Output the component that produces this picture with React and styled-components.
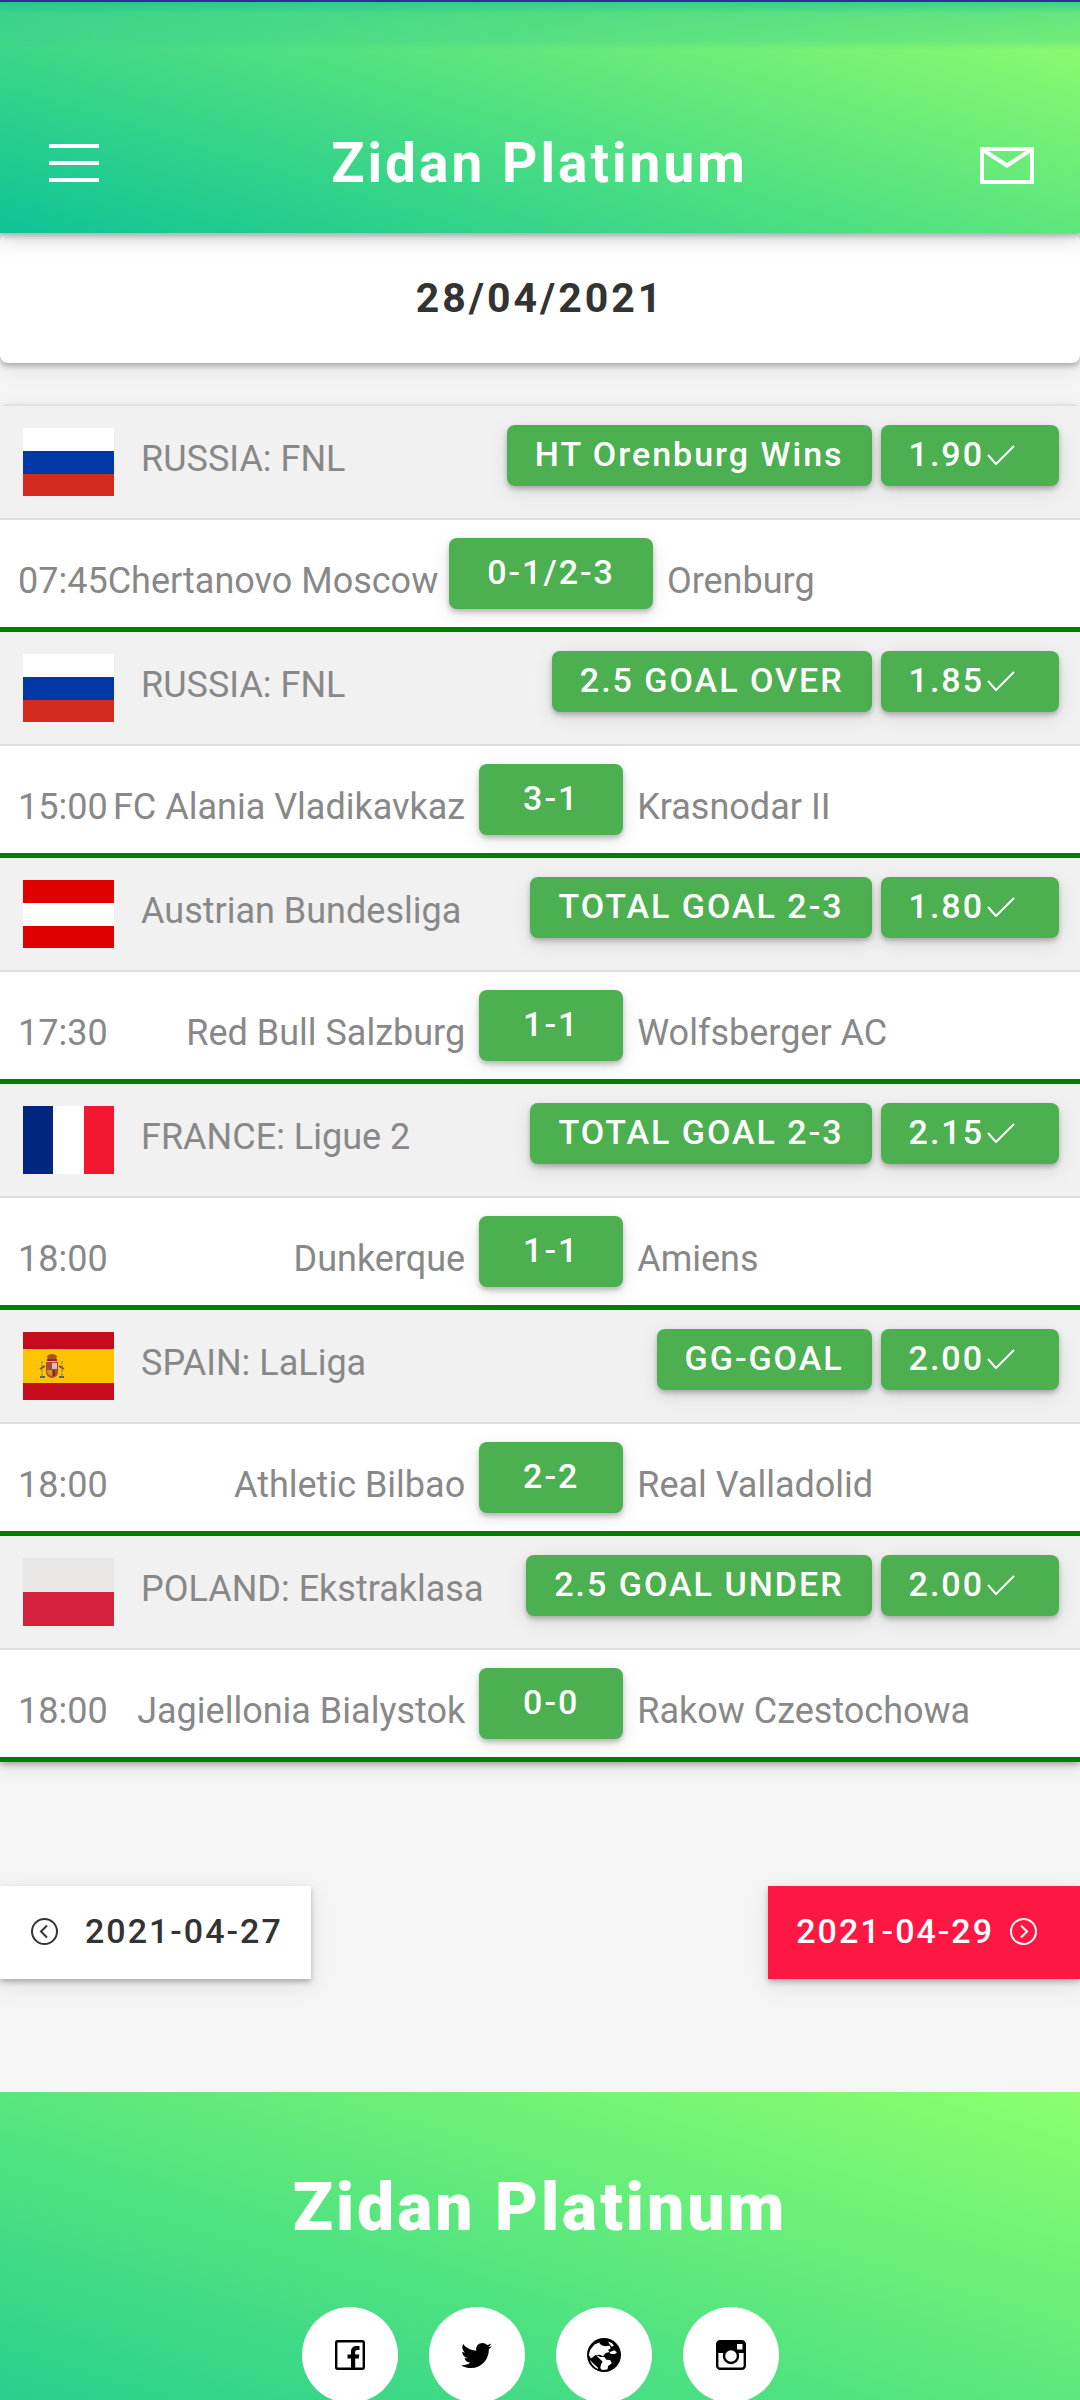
import React from "react";
import styled, { createGlobalStyle, css } from "styled-components";
import { FaTwitter } from "react-icons/fa";

const matches = [
  {
    id: 1,
    flag: "russia",
    league: "RUSSIA: FNL",
    tip: "HT Orenburg Wins",
    odd: "1.90",
    time: "07:45",
    home: "Chertanovo Moscow",
    score: "0-1/2-3",
    away: "Orenburg",
  },
  {
    id: 2,
    flag: "russia",
    league: "RUSSIA: FNL",
    tip: "2.5 GOAL OVER",
    odd: "1.85",
    time: "15:00",
    home: "FC Alania Vladikavkaz",
    score: "3-1",
    away: "Krasnodar II",
  },
  {
    id: 3,
    flag: "austria",
    league: "Austrian Bundesliga",
    tip: "TOTAL GOAL 2-3",
    odd: "1.80",
    time: "17:30",
    home: "Red Bull Salzburg",
    score: "1-1",
    away: "Wolfsberger AC",
  },
  {
    id: 4,
    flag: "france",
    league: "FRANCE: Ligue 2",
    tip: "TOTAL GOAL 2-3",
    odd: "2.15",
    time: "18:00",
    home: "Dunkerque",
    score: "1-1",
    away: "Amiens",
  },
  {
    id: 5,
    flag: "spain",
    league: "SPAIN: LaLiga",
    tip: "GG-GOAL",
    odd: "2.00",
    time: "18:00",
    home: "Athletic Bilbao",
    score: "2-2",
    away: "Real Valladolid",
  },
  {
    id: 6,
    flag: "poland",
    league: "POLAND: Ekstraklasa",
    tip: "2.5 GOAL UNDER",
    odd: "2.00",
    time: "18:00",
    home: "Jagiellonia Bialystok",
    score: "0-0",
    away: "Rakow Czestochowa",
  },
];

const MenuIcon = () => (
  <svg width="50" height="38" viewBox="0 0 50 38" fill="#fff">
    <rect width="50" height="4" />
    <rect y="17" width="50" height="4" />
    <rect y="34" width="50" height="4" />
  </svg>
);

const MailIcon = () => (
  <svg width="54" height="42" viewBox="0 0 54 42" fill="none" stroke="#fff">
    <rect x="2" y="7" width="50" height="33" strokeWidth="4" />
    <path d="M3 8L27 23.5L51 8" strokeWidth="4" />
  </svg>
);

const CheckIcon = () => (
  <svg width="28" height="20" viewBox="0 0 28 20" fill="none" stroke="#fff">
    <path d="M1 10L9 19L27 1" strokeWidth="2" strokeLinejoin="round" />
  </svg>
);

const ChevronCircle = ({ direction }) => (
  <svg
    width="27"
    height="27"
    viewBox="0 0 27 27"
    fill="none"
    stroke="currentColor"
    strokeWidth="2"
  >
    <circle cx="13.5" cy="13.5" r="12.5" />
    <path
      d={direction === "left" ? "M16 7.5L10 13.5L16 19.5" : "M11 7.5L17 13.5L11 19.5"}
    />
  </svg>
);

const FacebookIcon = () => (
  <svg width="30" height="30" viewBox="0 0 30 30">
    <rect
      x="1.2"
      y="1.2"
      width="27.6"
      height="27.6"
      rx="1.5"
      fill="none"
      stroke="#000"
      strokeWidth="2.4"
    />
    <path d="M16 29V18.5H12.5V14.5H16V11.8C16 8 18.3 6 21.6 6H24.5V10H22.4C20.9 10 20.2 10.8 20.2 12V14.5H24.3L23.8 18.5H20.2V29Z" />
  </svg>
);

const GlobeIcon = () => (
  <svg width="34" height="34" viewBox="0 0 100 100">
    <circle cx="50" cy="50" r="50" />
    <g fill="#fff">
      <path d="M10 34L22 19L37 13L43 21L55 24L66 22L70 30L62 35L66 41L55 44L47 54L38 49L25 50L12 60L5 50Z" />
      <path d="M26 50L40 56L51 56L57 64L68 65L73 74L62 82L60 93L44 94L39 88L42 76L46 70L38 62Z" />
      <path d="M62 10L73 15L79 23L73 26L66 18Z" />
      <path d="M66 42L80 36L88 42L82 47L70 47Z" />
      <path d="M8 64L14 76L24 87L33 92L31 86L18 74Z" />
    </g>
    <path d="M36 17L48 9L60 16L50 22Z" />
  </svg>
);

const InstagramIcon = () => (
  <svg width="30" height="30" viewBox="0 0 30 30">
    <rect
      x="1.2"
      y="1.2"
      width="27.6"
      height="27.6"
      rx="3"
      fill="none"
      stroke="#000"
      strokeWidth="2.4"
    />
    <path d="M1 4Q1 1 4 1H26Q29 1 29 4V13H1Z" />
    <rect x="21" y="4" width="5.5" height="5.5" fill="#fff" />
    <circle cx="15" cy="16" r="7" fill="#fff" stroke="#000" strokeWidth="2.4" />
  </svg>
);

const Crest = () => (
  <svg width="26" height="26" viewBox="0 0 26 26">
    <path d="M8 3Q13 -1 18 3L17 7H9Z" fill="#a8542a" />
    <rect x="8" y="6" width="10" height="2" fill="#c8102e" />
    <path d="M7 9H19V19Q19 24 13 25Q7 24 7 19Z" fill="#a5502c" />
    <path d="M13 10H18V16H13Z" fill="#dcb7c4" />
    <path d="M8 17H13V23Q9 22 8 19Z" fill="#d8902c" />
    <path d="M14 17H16V23H14Z" fill="#7c2a20" />
    <path
      d="M3 8V23M23 8V23"
      stroke="#a59a86"
      strokeWidth="2"
      strokeDasharray="3 1"
    />
    <path d="M1 16L6 13M25 16L20 13" stroke="#a5442c" strokeWidth="2" />
    <path d="M1 24H6M20 24H25" stroke="#4d6584" strokeWidth="2" />
  </svg>
);

const App = () => {
  return (
    <Page>
      <GlobalStyle />

      <Header>
        <StatusBar />
        <Toolbar>
          <IconButton type="button" aria-label="Menu">
            <MenuIcon />
          </IconButton>
          <Brand>Zidan Platinum</Brand>
          <IconButton type="button" aria-label="Messages">
            <MailIcon />
          </IconButton>
        </Toolbar>
      </Header>

      <DateCard>28/04/2021</DateCard>

      <MatchList>
        {matches.map((match) => (
          <Match key={match.id}>
            <LeagueRow>
              <League>
                <Flag $country={match.flag}>
                  {match.flag === "spain" && <Crest />}
                </Flag>
                <LeagueName>{match.league}</LeagueName>
              </League>
              <Tips>
                <TipButton type="button">{match.tip}</TipButton>
                <OddButton type="button">
                  {match.odd}
                  <CheckIcon />
                </OddButton>
              </Tips>
            </LeagueRow>
            <GameRow>
              <HomeSide>
                <span>{match.time}</span>
                <span>{match.home}</span>
              </HomeSide>
              <ScoreButton type="button">{match.score}</ScoreButton>
              <AwaySide>{match.away}</AwaySide>
            </GameRow>
          </Match>
        ))}
      </MatchList>

      <DayNav>
        <PrevLink href="#2021-04-27">
          <ChevronCircle direction="left" />
          2021-04-27
        </PrevLink>
        <NextLink href="#2021-04-29">
          2021-04-29
          <ChevronCircle direction="right" />
        </NextLink>
      </DayNav>

      <Footer>
        <FooterBrand>Zidan Platinum</FooterBrand>
        <Socials>
          <SocialLink href="#facebook" aria-label="Facebook">
            <FacebookIcon />
          </SocialLink>
          <SocialLink href="#twitter" aria-label="Twitter">
            <FaTwitter size={31} />
          </SocialLink>
          <SocialLink href="#website" aria-label="Website">
            <GlobeIcon />
          </SocialLink>
          <SocialLink href="#instagram" aria-label="Instagram">
            <InstagramIcon />
          </SocialLink>
        </Socials>
      </Footer>
    </Page>
  );
};

// Styled Components
const GlobalStyle = createGlobalStyle`
  * {
    box-sizing: border-box;
  }

  body {
    margin: 0;
    background: #f5f5f5;
    font-family: Roboto, "Liberation Sans", sans-serif;
  }

  button {
    font-family: inherit;
    border: none;
    cursor: pointer;
  }

  svg {
    display: block;
    flex-shrink: 0;
  }
`;

const raised = css`
  box-shadow: 0 3px 5px rgba(0, 0, 0, 0.24), 0 6px 20px rgba(0, 0, 0, 0.1);
`;

const Page = styled.div`
  height: 100vh;
  overflow-x: hidden;
  overflow-y: auto;
  scrollbar-width: none;
`;

const Header = styled.header`
  position: relative;
  z-index: 1;
  background: linear-gradient(17deg, #0ec395, #96ff6c);
  box-shadow: 0 3px 6px rgba(0, 0, 0, 0.25), 0 8px 20px rgba(0, 0, 0, 0.14);
`;

const StatusBar = styled.div`
  height: 50px;
  border-top: 2px solid #2e3192;
  background: linear-gradient(
    rgba(20, 190, 150, 0.7),
    rgba(50, 200, 145, 0.45) 25%,
    rgba(60, 205, 145, 0.35) 80%,
    rgba(60, 205, 145, 0)
  );
`;

const Toolbar = styled.div`
  display: flex;
  align-items: center;
  justify-content: space-between;
  padding: 81px 46px 38px 49px;
`;

const IconButton = styled.button`
  padding: 0;
  background: none;
`;

const Brand = styled.h1`
  margin: 0;
  color: #fff;
  font-size: 55px;
  font-weight: 700;
  line-height: 64px;
  letter-spacing: 3px;
`;

const DateCard = styled.div`
  padding: 41px 0;
  background: #fff;
  border-radius: 8px;
  color: #333;
  font-size: 41px;
  font-weight: 700;
  line-height: 48px;
  letter-spacing: 3px;
  text-align: center;
  ${raised}
`;

const MatchList = styled.section`
  margin-top: 41px;
  border-top: 2px solid #e0e0e0;
  border-radius: 8px 8px 0 0;
  ${raised}
`;

const Match = styled.article`
  border-bottom: 5px solid #008000;
  color: #888;
  font-size: 36px;
  white-space: nowrap;
`;

const LeagueRow = styled.div`
  display: flex;
  align-items: flex-start;
  justify-content: space-between;
  padding: 19px 21px 22px 23px;
  background: #f1f1f1;
  border-bottom: 2px solid #dfdfe3;
`;

const League = styled.div`
  display: flex;
  align-items: flex-start;
  gap: 27px;
  padding-top: 3px;
`;

const flags = {
  russia: "linear-gradient(#fff 34%, #0039a6 34% 67%, #d52b1e 67%)",
  austria: "linear-gradient(#df0000 34%, #fff 34% 67%, #df0000 67%)",
  france: "linear-gradient(90deg, #00267f 33%, #fff 33% 67%, #f31830 67%)",
  spain: "linear-gradient(#c60b1e 25%, #ffc400 25% 75%, #c60b1e 75%)",
  poland: "linear-gradient(#e9e8e7 50%, #d4213d 50%)",
};

const Flag = styled.div`
  display: flex;
  align-items: center;
  width: 91px;
  height: 68px;
  padding-left: 16px;
  background: ${(props) => flags[props.$country]};
`;

const LeagueName = styled.span`
  line-height: 62px;
`;

const Tips = styled.div`
  display: flex;
  gap: 9px;
`;

const GreenButton = styled.button`
  display: flex;
  align-items: center;
  justify-content: center;
  border-radius: 8px;
  background: #4caf50;
  color: #fff;
  font-size: 34px;
  font-weight: 500;
  line-height: 41px;
  letter-spacing: 2px;
  ${raised}
`;

const TipButton = styled(GreenButton)`
  padding: 9px 28px 11px;
`;

const OddButton = styled(GreenButton)`
  gap: 3px;
  padding: 9px 44px 11px 28px;
`;

const ScoreButton = styled(GreenButton)`
  min-width: 144px;
  padding: 14px 38px 16px;
`;

const GameRow = styled.div`
  display: grid;
  grid-template-columns: minmax(0, 101fr) auto minmax(0, 100fr);
  align-items: center;
  gap: 14px;
  padding: 18px 0 18px 18px;
  background: #fff;
`;

const HomeSide = styled.div`
  display: flex;
  justify-content: space-between;
  padding-top: 14px;
  line-height: 42px;
`;

const AwaySide = styled.div`
  padding-top: 14px;
  line-height: 42px;
`;

const DayNav = styled.nav`
  display: flex;
  justify-content: space-between;
  margin: 124px 0 113px;
`;

const DayLink = styled.a`
  display: flex;
  align-items: center;
  padding: 25px 28px 27px;
  font-size: 34px;
  font-weight: 500;
  line-height: 41px;
  letter-spacing: 2px;
  text-decoration: none;
  ${raised}
`;

const PrevLink = styled(DayLink)`
  gap: 27px;
  padding-left: 31px;
  background: #fff;
  color: #333;
`;

const NextLink = styled(DayLink)`
  gap: 16px;
  padding-right: 43px;
  background: #ff1744;
  color: #fff;
`;

const Footer = styled.footer`
  padding: 76px 0 190px;
  background: linear-gradient(17deg, #0bc196, #8cff6e);
`;

const FooterBrand = styled.h2`
  margin: 0 0 59px;
  color: #fff;
  font-size: 66px;
  font-weight: 900;
  line-height: 80px;
  letter-spacing: 3px;
  text-align: center;
`;

const Socials = styled.div`
  display: flex;
  justify-content: center;
  gap: 31px;
`;

const SocialLink = styled.a`
  display: flex;
  align-items: center;
  justify-content: center;
  width: 96px;
  height: 96px;
  border-radius: 50%;
  background: #fff;
  color: #000;
`;

export default App;
